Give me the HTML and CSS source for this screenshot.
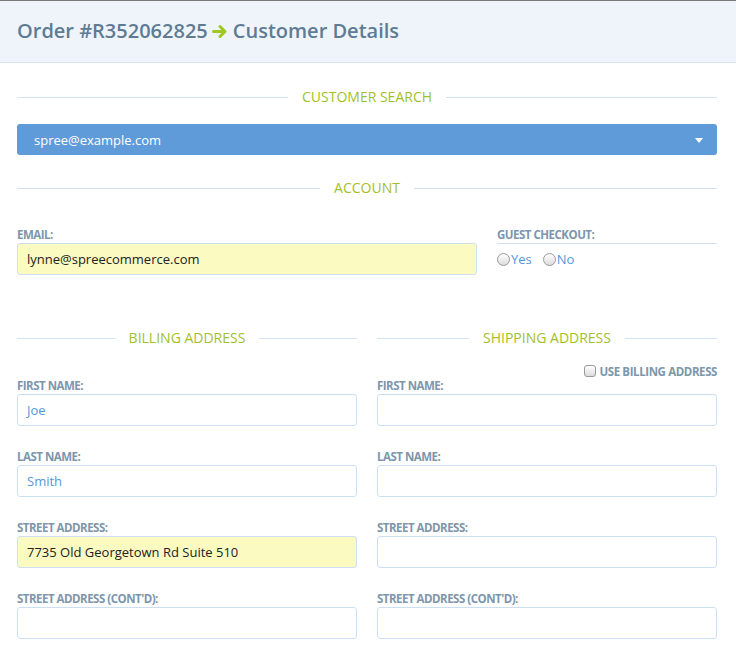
FILE: index.html
```html
<!DOCTYPE html>
<html>
<head>
<meta charset="utf-8">
<link rel="stylesheet" href="styles.css">
</head>
<body>
<header class="page-header">
  <h1 class="page-title">Order #R352062825<svg class="arrow" width="16" height="15" viewBox="0 0 16 15"><path d="M1.5 7.5 H13 M8 2.5 L13 7.5 L8 12.5" fill="none" stroke="#9fc820" stroke-width="3" stroke-linecap="round" stroke-linejoin="round"/></svg>Customer Details</h1>
</header>
<main class="content">
  <div class="divider divider-first"><span class="divider-text">CUSTOMER SEARCH</span></div>
  <div class="search-select">
    <span class="search-value">spree@example.com</span>
    <span class="caret"></span>
  </div>

  <div class="divider divider-account"><span class="divider-text">ACCOUNT</span></div>
  <div class="account-row">
    <div class="field">
      <label class="field-label">EMAIL:</label>
      <div class="input input-filled">lynne@spreecommerce.com</div>
    </div>
    <div class="guest">
      <div class="field-label guest-label">GUEST CHECKOUT:</div>
      <div class="radios">
        <span class="radio-opt"><span class="radio"></span>Yes</span>
        <span class="radio-opt"><span class="radio"></span>No</span>
      </div>
    </div>
  </div>

  <div class="address-grid">
    <section class="address-col">
      <div class="divider"><span class="divider-text">BILLING ADDRESS</span></div>
      <div class="use-billing hidden"></div>
      <div class="field">
        <label class="field-label">FIRST NAME:</label>
        <div class="input input-blue">Joe</div>
      </div>
      <div class="field">
        <label class="field-label">LAST NAME:</label>
        <div class="input input-blue">Smith</div>
      </div>
      <div class="field">
        <label class="field-label">STREET ADDRESS:</label>
        <div class="input input-filled">7735 Old Georgetown Rd Suite 510</div>
      </div>
      <div class="field">
        <label class="field-label">STREET ADDRESS (CONT'D):</label>
        <div class="input"></div>
      </div>
    </section>
    <section class="address-col">
      <div class="divider"><span class="divider-text">SHIPPING ADDRESS</span></div>
      <div class="use-billing"><span class="checkbox"></span>USE BILLING ADDRESS</div>
      <div class="field">
        <label class="field-label">FIRST NAME:</label>
        <div class="input"></div>
      </div>
      <div class="field">
        <label class="field-label">LAST NAME:</label>
        <div class="input"></div>
      </div>
      <div class="field">
        <label class="field-label">STREET ADDRESS:</label>
        <div class="input"></div>
      </div>
      <div class="field">
        <label class="field-label">STREET ADDRESS (CONT'D):</label>
        <div class="input"></div>
      </div>
    </section>
  </div>
</main>
</body>
</html>
```

FILE: styles.css
```css
* { box-sizing: border-box; }
html, body { margin: 0; padding: 0; background: #fff; }
body {
  font-family: "Open Sans", "Noto Sans", sans-serif;
  color: #333;
  overflow: hidden;
}
.page-header {
  height: 63px;
  border-top: 1px solid #7a7a7a;
  background: #eff4fb;
  border-bottom: 1px solid #d6e3f1;
  display: flex;
  align-items: center;
  padding-left: 17px;
}
.page-title {
  margin: 0 0 2px 0;
  font-size: 20px;
  font-weight: 600;
  color: #5e7b93;
  display: flex;
  align-items: center;
}
.arrow {
  margin: 1px 5px 0 4px;
}
.content {
  padding: 0 19px 0 17px;
}
.divider {
  display: flex;
  align-items: center;
  height: 20px;
  gap: 14px;
}
.divider::before, .divider::after {
  content: "";
  flex: 1;
  height: 1px;
  background: #d3e2f1;
}
.divider-text {
  color: #a2c128;
  font-size: 14px;
  line-height: 20px;
  font-weight: 400;
}
.divider-first { margin-top: 24px; }
.search-select {
  margin-top: 17px;
  height: 31px;
  background: #5f9bd8;
  border-radius: 3px;
  display: flex;
  align-items: center;
  justify-content: space-between;
  padding: 0 14px 0 17px;
  color: #fff;
  font-size: 13px;
}
.caret {
  width: 0; height: 0;
  border-left: 4px solid transparent;
  border-right: 4px solid transparent;
  border-top: 5px solid #fff;
  margin-top: 1px;
}
.divider-account { margin-top: 23px; }
.account-row {
  display: grid;
  grid-template-columns: 460px 1fr;
  gap: 20px;
  margin-top: 29px;
}
.field-label {
  display: block;
  font-size: 11.5px;
  font-weight: 700;
  line-height: 16px;
  color: #7d96ab;
  letter-spacing: -0.5px;
}
.input {
  height: 32px;
  border: 1px solid #cde0f3;
  border-radius: 3px;
  background: #fff;
  padding: 0 9px;
  display: flex;
  align-items: center;
  font-size: 13px;
  color: #222;
}
.input-filled { background: #fbfac1; }
.input-blue { color: #5498da; }
.guest-label {
  border-bottom: 1px solid #d3e2f1;
  padding-bottom: 0;
}
.radios {
  display: flex;
  gap: 11px;
  margin-top: 6px;
}
.radio-opt {
  display: inline-flex;
  align-items: center;
  font-size: 13px;
  color: #5498da;
}
.radio {
  width: 13px; height: 13px;
  border-radius: 50%;
  border: 1px solid #9a9a9a;
  background: linear-gradient(#ffffff, #dcdcdc);
  margin-right: 1px;
}
.address-grid {
  display: grid;
  grid-template-columns: 1fr 1fr;
  gap: 20px;
  margin-top: 53px;
}
.use-billing {
  margin-top: 15px;
  height: 16px;
  display: flex;
  justify-content: flex-end;
  align-items: center;
  font-size: 11.5px;
  font-weight: 700;
  color: #7d96ab;
  letter-spacing: -0.4px;
}
.hidden { visibility: hidden; }
.checkbox {
  width: 12px; height: 12px;
  border: 1px solid #9a9a9a;
  border-radius: 3px;
  background: linear-gradient(#ffffff, #dcdcdc);
  margin-right: 3px;
}
.address-col .field { margin-bottom: 23px; }
.address-col .use-billing + .field { margin-top: -1px; }
```
